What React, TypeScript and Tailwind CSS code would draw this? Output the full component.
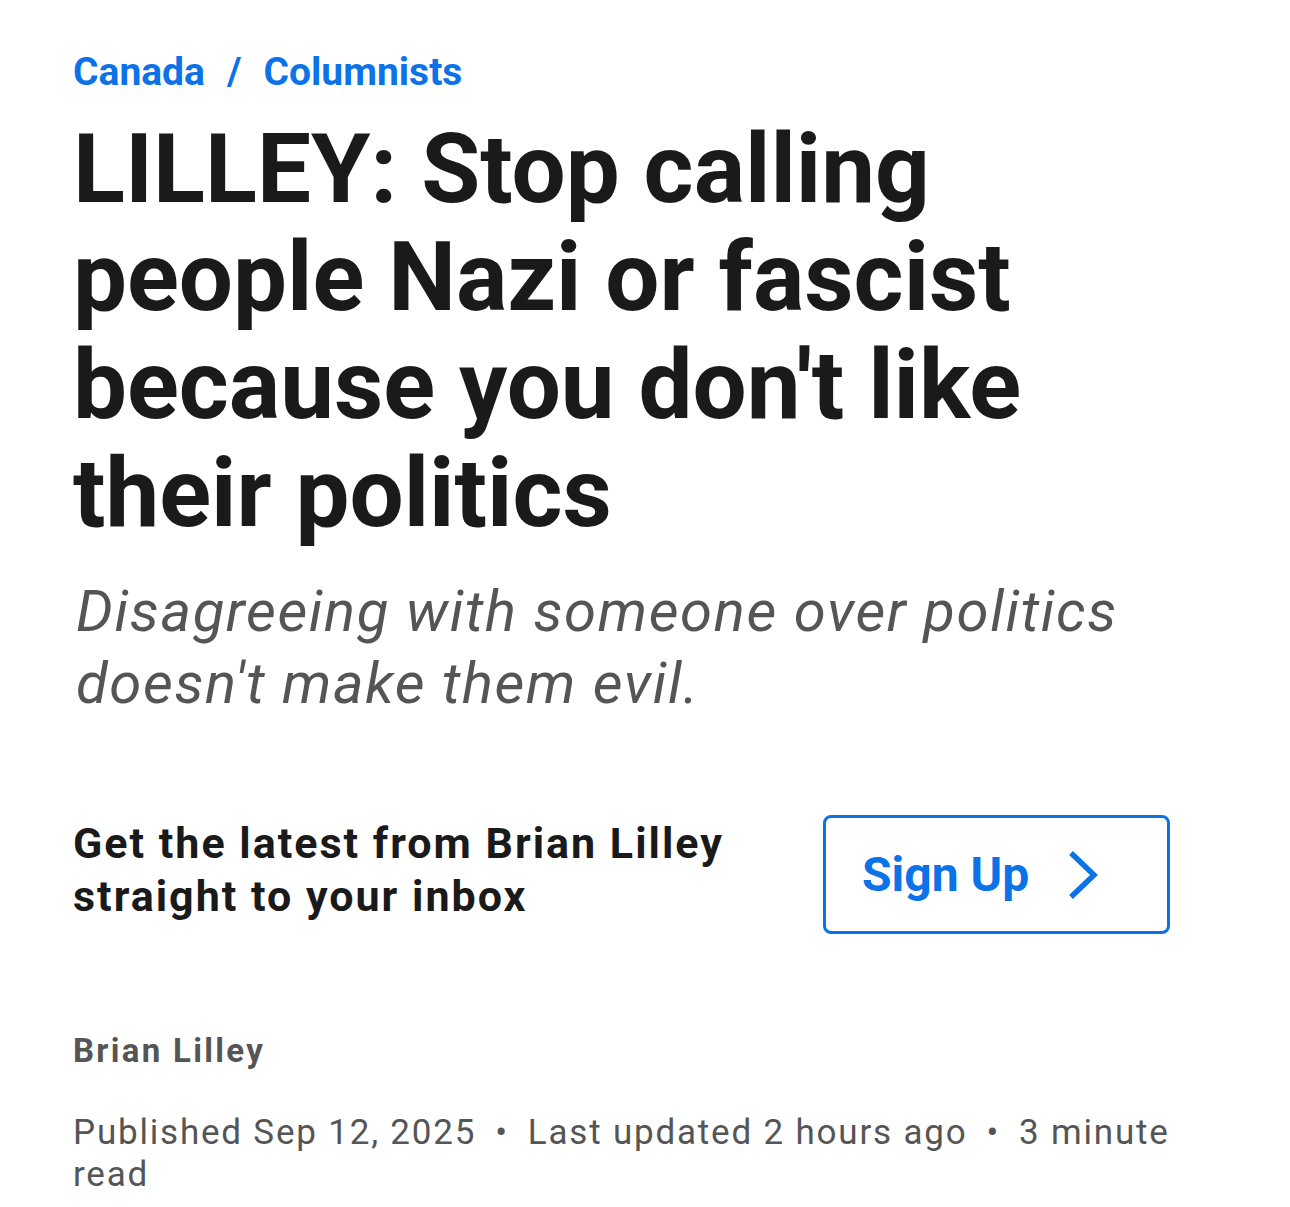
import React from "react";

const BLUE = "text-[#0b72e7]";

const Chevron = () => (
  <svg width="32" height="50" viewBox="0 0 32 50" fill="none" className="text-[#0b72e7]">
    <polyline points="4,3 27,25 4,47" stroke="currentColor" strokeWidth="5.5" strokeLinejoin="miter" />
  </svg>
);

const Dot = () => <span className="mx-[19px]">•</span>;

export default function App() {
  return (
    <div className="min-h-screen bg-white font-['Roboto',sans-serif]">
      <div className="pl-[73px] pr-[73px] pt-[48px] pb-[20px]">
        {/* breadcrumb */}
        <nav className={`text-[39px] leading-[48px] font-bold ${BLUE}`}>
          <a href="#">Canada</a>
          <span className="mx-[22px]">/</span>
          <a href="#">Columnists</a>
        </nav>

        {/* headline */}
        <h1 className="mt-[19px] text-[96px] leading-[108px] font-bold text-[#1a1a1a]">
          LILLEY: Stop calling people Nazi or fascist because you don't like their politics
        </h1>

        {/* deck */}
        <p className="mt-[28px] text-[58px] leading-[72px] italic text-[#555555] pl-[3px] tracking-[1.6px]">
          Disagreeing with someone over politics doesn't make them evil.
        </p>

        {/* newsletter */}
        <div className="mt-[96px] flex items-center">
          <p className="w-[730px] mb-[10px] text-[43px] leading-[53px] font-bold text-[#1a1a1a] tracking-[2px]">
            Get the latest from Brian Lilley straight to your inbox
          </p>
          <button className="ml-[20px] w-[347px] h-[119px] border-[3px] border-[#0b72e7] rounded-[8px] flex items-center pl-[36px]">
            <span className={`text-[48px] font-bold ${BLUE}`}>Sign Up</span>
            <span className="ml-[38px] flex items-center">
              <Chevron />
            </span>
          </button>
        </div>

        {/* byline */}
        <div className="mt-[97px] text-[33px] leading-[40px] font-bold text-[#555555] tracking-[2.3px]">
          Brian Lilley
        </div>
        <div className="mt-[41px] text-[35px] leading-[42px] text-[#555555] tracking-[1.8px]">
          <span>Published Sep 12, 2025</span>
          <Dot />
          <span>Last updated 2 hours ago</span>
          <Dot />
          <span>3 minute</span> <span>read</span>
        </div>
      </div>
    </div>
  );
}
